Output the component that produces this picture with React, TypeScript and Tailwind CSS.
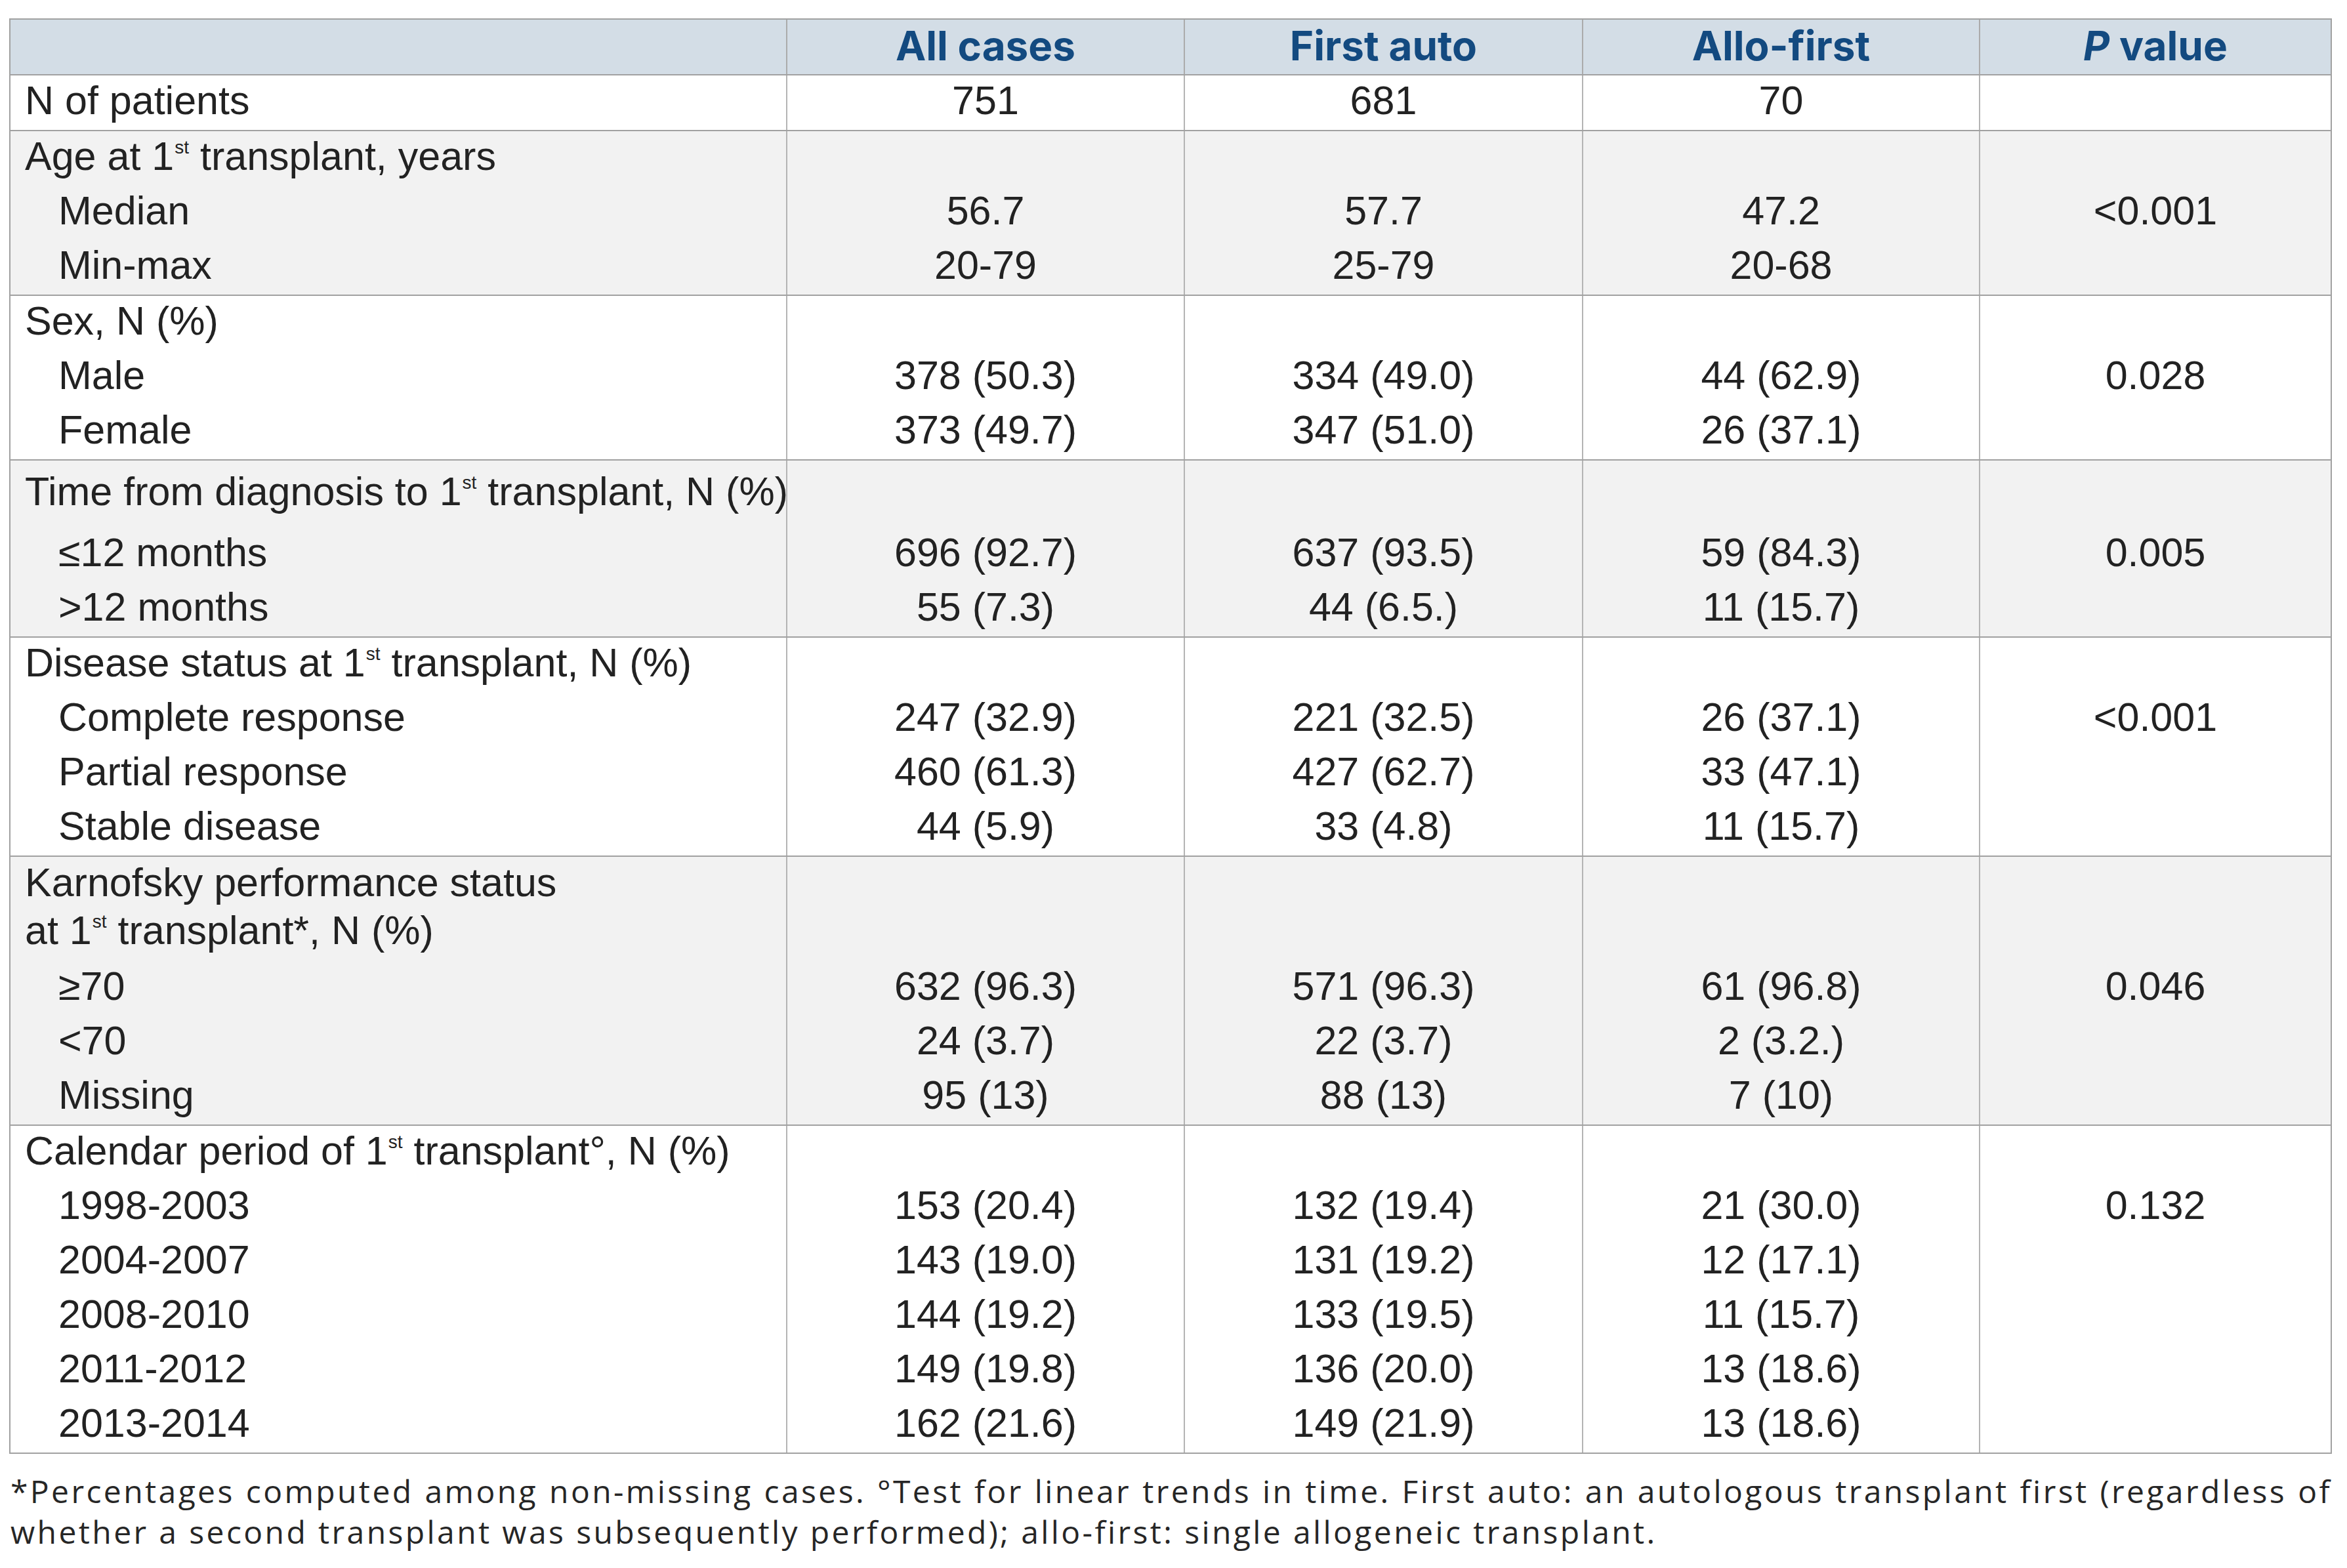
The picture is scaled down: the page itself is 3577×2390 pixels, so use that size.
import React from "react";

type Line = {
  label: React.ReactNode;
  vals?: string[];
  indent?: boolean;
  cls?: string;
};

type Group = { bg: string; lines: Line[] };

const St = () => <sup className="text-[28px] top-[-25px] ml-[1px]">st</sup>;

const groups: Group[] = [
  { bg: "bg-white", lines: [{ label: "N of patients", vals: ["751", "681", "70", ""] }] },
  {
    bg: "bg-[#f2f2f2]",
    lines: [
      { label: <>Age at 1<St /> transplant, years</> },
      { label: "Median", indent: true, vals: ["56.7", "57.7", "47.2", "<0.001"] },
      { label: "Min-max", indent: true, vals: ["20-79", "25-79", "20-68", ""] },
    ],
  },
  {
    bg: "bg-white",
    lines: [
      { label: "Sex, N (%)" },
      { label: "Male", indent: true, vals: ["378 (50.3)", "334 (49.0)", "44 (62.9)", "0.028"] },
      { label: "Female", indent: true, vals: ["373 (49.7)", "347 (51.0)", "26 (37.1)", ""] },
    ],
  },
  {
    bg: "bg-[#f2f2f2]",
    lines: [
      { label: <>Time from diagnosis to 1<St /> transplant, N (%)</>, cls: "pt-[11px] pb-[18px]" },
      { label: "≤12 months", indent: true, vals: ["696 (92.7)", "637 (93.5)", "59 (84.3)", "0.005"] },
      { label: ">12 months", indent: true, vals: ["55 (7.3)", "44 (6.5.)", "11 (15.7)", ""] },
    ],
  },
  {
    bg: "bg-white",
    lines: [
      { label: <>Disease status at 1<St /> transplant, N (%)</> },
      { label: "Complete response", indent: true, vals: ["247 (32.9)", "221 (32.5)", "26 (37.1)", "<0.001"] },
      { label: "Partial response", indent: true, vals: ["460 (61.3)", "427 (62.7)", "33 (47.1)", ""] },
      { label: "Stable disease", indent: true, vals: ["44 (5.9)", "33 (4.8)", "11 (15.7)", ""] },
    ],
  },
  {
    bg: "bg-[#f2f2f2]",
    lines: [
      {
        label: (
          <>
            Karnofsky performance status
            <br />
            at 1<St /> transplant*, N (%)
          </>
        ),
        cls: "pt-[3px] pb-[10px]",
      },
      { label: "≥70", indent: true, vals: ["632 (96.3)", "571 (96.3)", "61 (96.8)", "0.046"] },
      { label: "<70", indent: true, vals: ["24 (3.7)", "22 (3.7)", "2 (3.2.)", ""] },
      { label: "Missing", indent: true, vals: ["95 (13)", "88 (13)", "7 (10)", ""] },
    ],
  },
  {
    bg: "bg-white",
    lines: [
      { label: <>Calendar period of 1<St /> transplant°, N (%)</> },
      { label: "1998-2003", indent: true, vals: ["153 (20.4)", "132 (19.4)", "21 (30.0)", "0.132"] },
      { label: "2004-2007", indent: true, vals: ["143 (19.0)", "131 (19.2)", "12 (17.1)", ""] },
      { label: "2008-2010", indent: true, vals: ["144 (19.2)", "133 (19.5)", "11 (15.7)", ""] },
      { label: "2011-2012", indent: true, vals: ["149 (19.8)", "136 (20.0)", "13 (18.6)", ""] },
      { label: "2013-2014", indent: true, vals: ["162 (21.6)", "149 (21.9)", "13 (18.6)", ""] },
    ],
  },
];

const gridCols = "grid grid-cols-[1182px_606px_607px_605px_1fr]";

export default function App() {
  return (
    <div className="w-[3577px] h-[2390px] bg-white pt-[28px] pl-[14px] text-[#222222]">
      <div className="w-[3540px] border-2 border-[#a1a1a1]">
        {/* header */}
        <div className={`${gridCols} bg-[#d3dde6] font-[family-name:Inter,sans-serif] font-bold text-[#134a80] text-[62px] leading-[73px]`}>
          <div className="pt-[3px] pb-[7px]"></div>
          <div className="border-l-2 border-[#ababab] text-center pt-[3px] pb-[7px]">All cases</div>
          <div className="border-l-2 border-[#ababab] text-center pt-[3px] pb-[7px]">First auto</div>
          <div className="border-l-2 border-[#ababab] text-center pt-[3px] pb-[7px]">Allo-first</div>
          <div className="border-l-2 border-[#ababab] text-center pt-[3px] pb-[7px]">
            <span className="italic">P</span> value
          </div>
        </div>
        {groups.map((g, gi) => (
          <div key={gi} className={`${gridCols} ${g.bg} border-t-2 border-[#a1a1a1] font-[family-name:'Liberation_Sans',Arial,sans-serif] text-[61px] leading-[73px]`}>
            {g.lines.map((ln, li) => {
              const pad = ln.cls ?? "pt-[2px] pb-[8px]";
              const vals = ln.vals ?? ["", "", "", ""];
              return (
                <React.Fragment key={li}>
                  <div className={`${pad} ${ln.indent ? "pl-[73px]" : "pl-[22px]"} whitespace-nowrap`}>{ln.label}</div>
                  {vals.map((v, vi) => (
                    <div key={vi} className={`${pad} border-l-2 border-[#b4b4b4] text-center whitespace-nowrap`}>
                      {v}
                    </div>
                  ))}
                </React.Fragment>
              );
            })}
          </div>
        ))}
      </div>
      <p className="w-[3540px] mt-[26px] pl-[2px] font-['Open_Sans'] text-[48px] leading-[62px] tracking-[3.4px] text-justify text-[#262626]">
        *Percentages computed among non-missing cases. °Test for linear trends in time. First auto: an autologous transplant
        first (regardless of whether a second transplant was subsequently performed); allo-first: single allogeneic transplant.
      </p>
    </div>
  );
}
